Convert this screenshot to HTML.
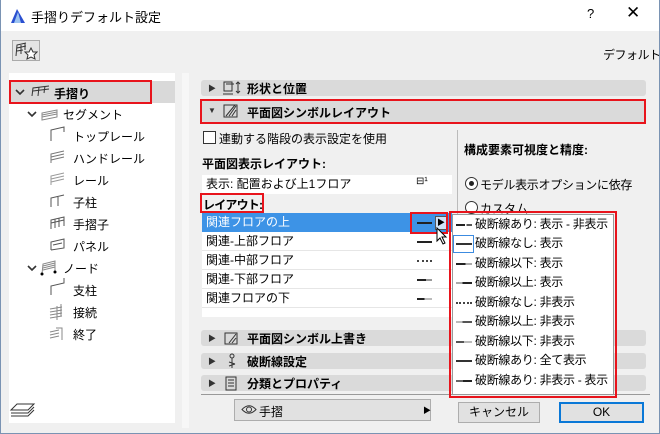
<!DOCTYPE html>
<html><head><meta charset="utf-8"><style>
*{margin:0;padding:0;box-sizing:border-box}
body{width:660px;height:434px;overflow:hidden;background:#f0f0f0;font-family:"Liberation Sans","Noto Sans CJK JP",sans-serif;font-size:12px;color:#000;position:relative}
.a{position:absolute;white-space:nowrap}
.b{font-weight:bold}
.rb{position:absolute;border:2px solid #e8141c}
.hdr{position:absolute;left:201px;width:445px;background:#dadada;border-radius:3px}
.hdr .t{position:absolute;left:7px;font-size:8px;color:#333}
.row{position:absolute;left:202px;width:250px;height:19px;line-height:19px;padding-left:4px;border-bottom:1px solid #e6e6e6;background:#fff}
.mi{position:absolute;left:452px;width:162px;height:19px;line-height:19px;padding-left:23px;font-size:12px;letter-spacing:-0.3px;white-space:nowrap}
.ln{position:absolute;left:4px;top:9px;width:16px;height:2px;background:#333}
</style></head><body>
<div class="a" style="left:0;top:0;width:660px;height:31px;background:#fff"></div>
<div class="a" style="left:0;top:0;width:1px;height:434px;background:#7a93b3"></div>
<div class="a" style="left:659px;top:0;width:1px;height:434px;background:#7a93b3"></div>
<div class="a" style="left:0;top:433px;width:660px;height:1px;background:#7a93b3"></div>
<svg class="a" style="left:10px;top:8px" width="16" height="16"><path d="M1 15 L7 1 L15 15 Z" fill="#2a4fd0"/><path d="M4 15 L8 4 L11 15Z" fill="#9cc3f0"/></svg>
<div class="a" style="left:31px;top:7px;font-size:13px">手摺りデフォルト設定</div>
<div class="a" style="left:587px;top:6px;font-size:13px">?</div>
<div class="a" style="left:626px;top:3px;font-size:17px;font-weight:300">✕</div>
<div class="a" style="left:12px;top:40px;width:28px;height:21px;border:1px solid #aaa;background:#e4e4e4"></div>
<svg class="a" style="left:14px;top:42px" width="24" height="18"><path d="M2 14 L3 3 L12 1 M3 6 L12 4 M3 9 L9 8 M7 3 L7 12 M11 1 L11 8" stroke="#333" fill="none"/><path d="M17 6 L19 10 L23 10 L20 13 L21 17 L17 15 L13 17 L14 13 L11 10 L15 10Z" stroke="#333" fill="#fff"/></svg>
<div class="a" style="left:603px;top:46px;letter-spacing:-0.5px">デフォルト</div>
<!-- left tree -->
<div class="a" style="left:9px;top:73px;width:166px;height:350px;background:#fff"></div>
<div class="a" style="left:9px;top:81px;width:166px;height:22px;background:#d9d9d9"></div>
<div class="rb" style="left:9px;top:80px;width:143px;height:24px"></div>
<svg class="a" style="left:15px;top:88px" width="10" height="8"><path d="M1 2 L5 6 L9 2" stroke="#333" stroke-width="1.6" fill="none"/></svg>
<svg class="a" style="left:31px;top:85px" width="20" height="12"><path d="M1 11 L2 3 L18 1 M2 6 L18 4 M8 2 L7 11 M14 1 L13 8" stroke="#333" fill="none"/></svg>
<div class="a b" style="left:54px;top:85px">手摺り</div>
<svg class="a" style="left:27px;top:110px" width="10" height="8"><path d="M1 2 L5 6 L9 2" stroke="#333" stroke-width="1.6" fill="none"/></svg>
<svg class="a" style="left:41px;top:109px" width="18" height="12"><path d="M1 11 L1 4 L16 1 L16 8 Z M1 6 L16 3 M1 8 L16 5" stroke="#888" fill="none"/></svg>
<div class="a" style="left:63px;top:106px">セグメント</div>
<div class="a" style="left:73px;top:128px">トップレール</div>
<div class="a" style="left:73px;top:150px">ハンドレール</div>
<div class="a" style="left:73px;top:172px">レール</div>
<div class="a" style="left:73px;top:194px">子柱</div>
<div class="a" style="left:73px;top:216px">手摺子</div>
<div class="a" style="left:73px;top:238px">パネル</div>
<svg class="a" style="left:27px;top:264px" width="10" height="8"><path d="M1 2 L5 6 L9 2" stroke="#333" stroke-width="1.6" fill="none"/></svg>
<svg class="a" style="left:40px;top:260px" width="18" height="16"><path d="M2 14 L3 4 L15 1 L15 12 M3 6 L15 3 M3 8 L15 5 M3 10 L15 7" stroke="#888" fill="none"/><circle cx="2" cy="14" r="1.5"/><circle cx="15" cy="12" r="1.5"/></svg>
<div class="a" style="left:63px;top:260px">ノード</div>
<div class="a" style="left:73px;top:282px">支柱</div>
<div class="a" style="left:73px;top:304px">接続</div>
<div class="a" style="left:73px;top:326px">終了</div>
<svg class="a" style="left:48px;top:126px" width="20" height="220" stroke="#555" fill="none">
<path d="M3 15 L3 4 L16 1 L16 6"/>
<path d="M3 37 L3 28 L16 25 M3 31 L16 28 M3 34 L16 31" stroke="#777"/>
<path d="M3 59 L3 50 L16 47 M3 53 L16 50 M3 56 L16 53" stroke="#999"/>
<path d="M3 81 L3 72 L16 69 M10 71 L10 80"/>
<path d="M3 103 L3 94 L16 91 L16 100 M7 93 L7 102 M11 92 L11 101 M3 97 L16 94"/>
<path d="M3 124 L3 116 L16 113 L16 122 L3 124 M5 119 L14 117"/>
<path d="M3 169 L3 160 L16 157 L16 152"/>
<path d="M2 183 L14 181 M2 186 L14 184 M2 189 L14 187 M2 192 L14 190 M9 180 L9 194 M13 178 L13 190" stroke="#888"/>
<path d="M2 206 L11 204 M2 209 L11 207 M2 212 L11 210 M8 202 L14 202 L14 214" stroke="#888"/>
</svg>
<!-- splitter -->
<div class="a" style="left:182px;top:73px;width:7px;height:355px;background:#f7f7f7"></div>
<!-- section headers -->
<div class="hdr" style="top:80px;height:16px"><span class="t" style="top:3px">▶</span></div>
<svg class="a" style="left:222px;top:81px" width="22" height="15" stroke="#333" fill="none"><rect x="2" y="1" width="8" height="9"/><path d="M1 13 L11 13 M4 3 L12 3 M16 1 L16 12 M14 3 L16 1 L18 3 M14 10 L16 12 L18 10"/></svg>
<div class="a b" style="left:247px;top:80px">形状と位置</div>
<div class="hdr" style="top:100px;height:22px"><span class="t" style="top:6px">▼</span></div>
<div class="rb" style="left:200px;top:99px;width:446px;height:25px"></div>
<svg class="a" style="left:222px;top:103px" width="18" height="16" stroke="#333" fill="none"><rect x="2" y="2" width="13" height="12"/><path d="M7 13 L14 3 M10 13 L14 7 M4 13 L13 2" stroke-width="1"/></svg>
<div class="a b" style="left:247px;top:104px">平面図シンボルレイアウト</div>
<div class="a" style="left:203px;top:131px;width:13px;height:13px;border:1px solid #333;background:#fff"></div>
<div class="a" style="left:219px;top:130px">連動する階段の表示設定を使用</div>
<div class="a b" style="left:202px;top:155px">平面図表示レイアウト:</div>
<div class="a" style="left:202px;top:175px;width:250px;height:19px;background:#fff;line-height:19px;padding-left:4px">表示: 配置および上1フロア</div>
<div class="a" style="left:416px;top:176px;font-size:10px">⊟¹</div>
<div class="a b" style="left:203px;top:196px;letter-spacing:-0.8px">レイアウト:</div>
<div class="rb" style="left:200px;top:193px;width:64px;height:20px"></div>
<div class="row" style="top:213px;background:#3d93e6;color:#fff;border:none">関連フロアの上</div>
<div class="row" style="top:232px">関連-上部フロア</div>
<div class="row" style="top:251px">関連-中部フロア</div>
<div class="row" style="top:270px">関連-下部フロア</div>
<div class="row" style="top:289px">関連フロアの下</div>
<div class="a" style="left:202px;top:308px;width:250px;height:9px;background:#fff"></div>
<div class="a" style="left:417px;top:222px;width:15px;height:2px;background:#222"></div>
<div class="a" style="left:435px;top:216px;width:12px;height:14px;background:#cfe3f7;border:1px solid #555;font-size:8px;line-height:12px;text-align:center">▶</div>
<div class="rb" style="left:410px;top:212px;width:38px;height:22px"></div>
<div class="a" style="left:417px;top:241px;width:15px;height:2px;background:#222"></div>
<div class="a" style="left:417px;top:260px;width:15px;height:2px;border-top:2px dotted #444"></div>
<div class="a" style="left:417px;top:279px;width:15px;height:2px;background:linear-gradient(90deg,#222 60%,#999 60%)"></div>
<div class="a" style="left:417px;top:298px;width:15px;height:2px;background:linear-gradient(90deg,#222 50%,#bbb 50%)"></div>
<svg class="a" style="left:436px;top:227px" width="12" height="18"><path d="M1 1 L1 14 L4 11 L7 17 L9 16 L6 10 L10 10Z" fill="#fff" stroke="#000"/></svg>
<!-- right column -->
<div class="a" style="left:457px;top:130px;width:1px;height:264px;background:#bbb"></div>
<div class="a b" style="left:464px;top:141px">構成要素可視度と精度:</div>
<div class="a" style="left:465px;top:177px;width:13px;height:13px;border:1px solid #333;border-radius:50%;background:#fff"></div>
<div class="a" style="left:469px;top:181px;width:5px;height:5px;border-radius:50%;background:#222"></div>
<div class="a" style="left:480px;top:176px;letter-spacing:-0.3px">モデル表示オプションに依存</div>
<div class="a" style="left:465px;top:201px;width:13px;height:13px;border:1px solid #333;border-radius:50%;background:#fff"></div>
<div class="a" style="left:480px;top:200px">カスタム</div>
<!-- collapsed headers -->
<div class="hdr" style="top:330px;height:16px"><span class="t" style="top:3px">▶</span></div>
<svg class="a" style="left:223px;top:331px" width="18" height="15" stroke="#333" fill="none"><rect x="2" y="2" width="12" height="11"/><path d="M6 12 L13 3 M9 12 L13 7"/></svg>
<div class="a b" style="left:247px;top:330px">平面図シンボル上書き</div>
<div class="hdr" style="top:353px;height:16px"><span class="t" style="top:3px">▶</span></div>
<svg class="a" style="left:226px;top:353px" width="12" height="16" stroke="#333" fill="none"><circle cx="6" cy="3" r="2"/><path d="M6 5 L6 15 M3 9 L9 11 M3 13 L9 11"/></svg>
<div class="a b" style="left:247px;top:353px">破断線設定</div>
<div class="hdr" style="top:375px;height:16px"><span class="t" style="top:3px">▶</span></div>
<svg class="a" style="left:225px;top:376px" width="12" height="15" stroke="#333" fill="none"><rect x="1" y="1" width="10" height="13"/><path d="M3 4 H9 M3 7 H9 M3 10 H9"/></svg>
<div class="a b" style="left:247px;top:375px">分類とプロパティ</div>
<div class="a" style="left:201px;top:394px;width:449px;height:1px;background:#999"></div>
<!-- bottom -->
<svg class="a" style="left:9px;top:402px" width="27" height="18" stroke="#333" fill="none"><path d="M2 8 L8 2 L25 2 L19 8 Z M2 11 L19 11 L25 5 M2 14 L19 14 L25 8"/></svg>
<div class="a" style="left:234px;top:399px;width:197px;height:22px;background:#e1e1e1;border:1px solid #adadad"></div>
<svg class="a" style="left:241px;top:404px" width="16" height="11" stroke="#333" fill="none"><path d="M1 5.5 Q8 -2 15 5.5 Q8 13 1 5.5Z"/><circle cx="8" cy="5.5" r="2.5"/></svg>
<div class="a" style="left:259px;top:403px">手摺</div>
<div class="a" style="left:423px;top:405px;font-size:8px">▶</div>
<div class="a" style="left:458px;top:402px;width:82px;height:21px;background:#e1e1e1;border:1px solid #adadad;text-align:center;line-height:19px">キャンセル</div>
<div class="a" style="left:559px;top:402px;width:85px;height:21px;background:#e1e1e1;border:2px solid #0a78d7;text-align:center;line-height:17px">OK</div>
<!-- popup menu -->
<div class="a" style="left:452px;top:214px;width:162px;height:181px;background:#fff;border:1px solid #999"></div>
<div class="rb" style="left:449px;top:211px;width:168px;height:187px"></div>
<div class="mi" style="top:215px"><span class="ln" style="background:linear-gradient(90deg,#222 55%,#fff 55%,#fff 65%,#555 65%)"></span>破断線あり: 表示 - 非表示</div>
<div class="mi" style="top:234px"><span class="a" style="left:1px;top:1px;width:21px;height:18px;border:1px solid #3c8be0"></span><span class="ln"></span>破断線なし: 表示</div>
<div class="mi" style="top:254px"><span class="ln" style="background:linear-gradient(90deg,#222 60%,#aaa 60%)"></span>破断線以下: 表示</div>
<div class="mi" style="top:273px"><span class="ln" style="background:linear-gradient(90deg,#aaa 40%,#222 40%)"></span>破断線以上: 表示</div>
<div class="mi" style="top:293px"><span class="ln" style="background:none;border-top:2px dotted #444"></span>破断線なし: 非表示</div>
<div class="mi" style="top:312px"><span class="ln" style="background:linear-gradient(90deg,#bbb 40%,#555 40%)"></span>破断線以上: 非表示</div>
<div class="mi" style="top:332px"><span class="ln" style="background:linear-gradient(90deg,#555 50%,#bbb 50%)"></span>破断線以下: 非表示</div>
<div class="mi" style="top:351px"><span class="ln"></span>破断線あり: 全て表示</div>
<div class="mi" style="top:371px"><span class="ln" style="background:linear-gradient(90deg,#666 45%,#222 45%)"></span>破断線あり: 非表示 - 表示</div>
</body></html>
